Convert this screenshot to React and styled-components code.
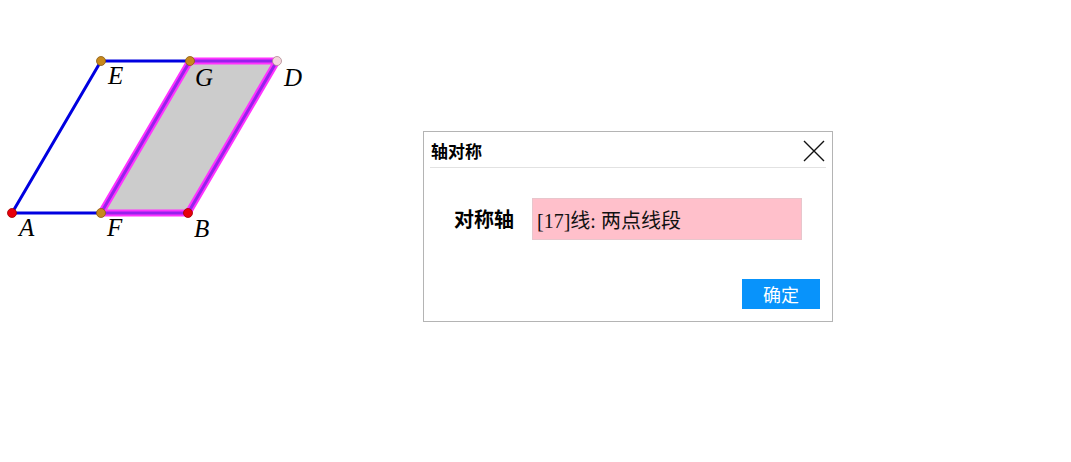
import styled, { createGlobalStyle } from "styled-components";

const Global = createGlobalStyle`
  html, body {
    margin: 0;
    padding: 0;
    background: #ffffff;
  }
  body {
    font-family: "Liberation Serif", "Noto Sans CJK SC", serif;
  }
`;

const Page = styled.div`
  display: flex;
  align-items: flex-start;
  width: 1071px;
  height: 462px;
`;

const Board = styled.svg`
  flex: none;
  display: block;
`;

const Dialog = styled.div`
  flex: none;
  box-sizing: border-box;
  width: 410px;
  height: 191px;
  margin: 131px 0 0 83px;
  border: 1px solid #b4b4b4;
  background: #fff;
  display: flex;
  flex-direction: column;
  padding: 0 6px;
`;

const TitleBar = styled.div`
  display: flex;
  align-items: center;
  justify-content: space-between;
  height: 35px;
  border-bottom: 1px solid #e2e2e2;
`;

const Title = styled.span`
  font-family: "Noto Sans CJK SC", sans-serif;
  font-weight: 700;
  font-size: 17px;
  line-height: 1;
  color: #000;
  padding-left: 1px;
  padding-top: 2px;
`;

const Close = styled.svg`
  margin-right: 1px;
  margin-top: 2px;
`;

const Body = styled.div`
  flex: 1;
  display: flex;
  flex-direction: column;
`;

const Row = styled.div`
  display: flex;
  align-items: center;
  margin-top: 30px;
  padding-left: 24px;
  gap: 18px;
`;

const Label = styled.span`
  font-family: "Noto Sans CJK SC", sans-serif;
  font-weight: 700;
  font-size: 20px;
  line-height: 1;
  color: #000;
`;

const Field = styled.div`
  width: 270px;
  height: 42px;
  box-sizing: border-box;
  background: #ffc0cb;
  border: 1px solid #e8c6cc;
  display: flex;
  align-items: center;
  padding-left: 4px;
  font-family: "Liberation Serif", "Noto Sans CJK SC", serif;
  font-size: 20px;
  color: #111;
`;

const Footer = styled.div`
  display: flex;
  justify-content: flex-end;
  margin-top: 39px;
  padding-right: 6px;
`;

const Button = styled.button`
  width: 78px;
  height: 30px;
  border: none;
  border-radius: 0;
  background: #0893fb;
  color: #fff;
  font-family: "Noto Sans CJK SC", sans-serif;
  font-size: 18px;
  line-height: 1;
  padding: 0;
  cursor: pointer;
`;

const pts = {
  A: [12, 213],
  F: [101, 213],
  B: [188, 213],
  E: [101, 61],
  G: [190, 61],
  D: [277, 61],
};

const points = [
  { id: "A", fill: "#e8000b", stroke: "#a00000" },
  { id: "F", fill: "#c8891c", stroke: "#8a5c10" },
  { id: "B", fill: "#e8000b", stroke: "#a00000" },
  { id: "E", fill: "#c8891c", stroke: "#8a5c10" },
  { id: "G", fill: "#c8891c", stroke: "#8a5c10" },
  { id: "D", fill: "#f4d6dc", stroke: "#b08890" },
];

const labels = [
  { t: "A", x: 19, y: 236 },
  { t: "F", x: 107, y: 236 },
  { t: "B", x: 194, y: 237 },
  { t: "E", x: 108, y: 84 },
  { t: "G", x: 195, y: 86 },
  { t: "D", x: 284, y: 86 },
];

const p = (k) => pts[k].join(",");

const Geometry = () => (
  <Board width="340" height="260" viewBox="0 0 340 260">
    <polyline points={`${p("F")} ${p("A")} ${p("E")} ${p("D")}`} fill="none" stroke="#0000e0" strokeWidth="3" />
    <polygon points={`${p("F")} ${p("B")} ${p("D")} ${p("G")}`} fill="#cccccc" stroke="#ff33ff" strokeWidth="7" strokeLinejoin="round" />
    <polygon points={`${p("F")} ${p("B")} ${p("D")} ${p("G")}`} fill="none" stroke="#6a1be2" strokeWidth="3" strokeOpacity="0.7" strokeLinejoin="round" />
    {points.map((pt) => (
      <circle key={pt.id} cx={pts[pt.id][0]} cy={pts[pt.id][1]} r="4.5" fill={pt.fill} stroke={pt.stroke} strokeWidth="0.8" />
    ))}
    {labels.map((l) => (
      <text key={l.t} x={l.x} y={l.y} fontFamily="Liberation Serif, serif" fontStyle="italic" fontSize="25" fill="#000">
        {l.t}
      </text>
    ))}
  </Board>
);

export default function App() {
  return (
    <>
      <Global />
      <Page>
        <Geometry />
        <Dialog>
          <TitleBar>
            <Title>轴对称</Title>
            <Close width="22" height="22" viewBox="0 0 22 22">
              <path d="M1 1 L21 21 M21 1 L1 21" stroke="#111" strokeWidth="1.4" />
            </Close>
          </TitleBar>
          <Body>
            <Row>
              <Label>对称轴</Label>
              <Field>[17]线: 两点线段</Field>
            </Row>
            <Footer>
              <Button>确定</Button>
            </Footer>
          </Body>
        </Dialog>
      </Page>
    </>
  );
}
